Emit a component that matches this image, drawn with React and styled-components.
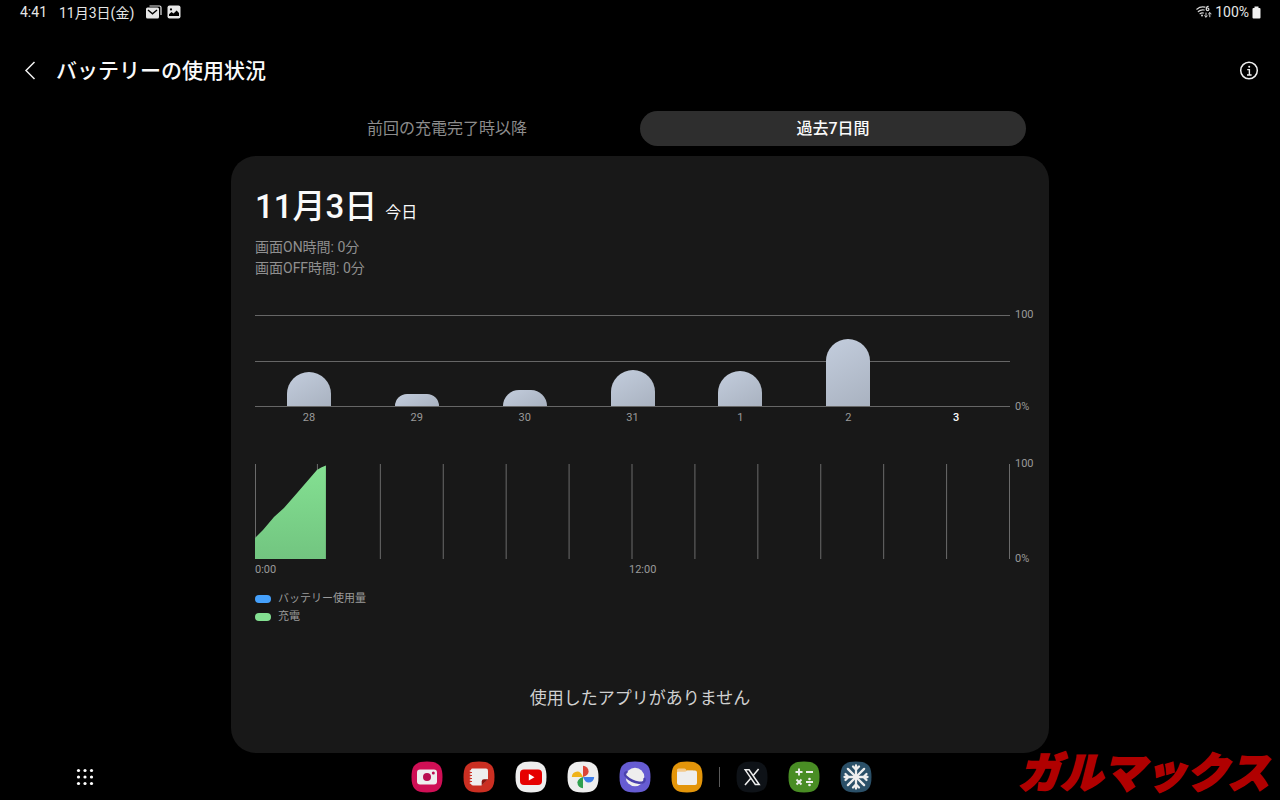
import React from 'react';
import styled, { createGlobalStyle } from 'styled-components';

const GlobalStyle = createGlobalStyle`
  * {
    box-sizing: border-box;
  }
  body {
    margin: 0;
    background: #000;
    color: #fafafa;
    font-family: Roboto, "Noto Sans CJK JP", sans-serif;
  }
  button {
    border: 0;
    padding: 0;
    background: none;
    color: inherit;
    font: inherit;
    cursor: pointer;
  }
  svg {
    display: block;
  }
`;

const Screen = styled.div`
  position: relative;
  display: flex;
  flex-direction: column;
  min-height: 100vh;
`;

const StatusBar = styled.div`
  display: flex;
  justify-content: space-between;
  height: 24px;
  padding: 0 19px 0 20px;
  font-size: 14px;
  color: #e6e6e6;
`;

const StatusGroup = styled.div`
  display: flex;
  align-items: center;
  gap: ${props => props.$gap}px;
`;

const Header = styled.header`
  display: flex;
  align-items: center;
  gap: 14px;
  height: 50px;
  margin-top: 22px;
  padding: 0 21px 0 18px;
`;

const IconButton = styled.button`
  width: 24px;
  height: 24px;
`;

const InfoButton = styled.button`
  width: 20px;
  height: 20px;
  margin-left: auto;
`;

const Title = styled.h1`
  margin: 0;
  font-size: 21px;
  line-height: 30px;
  font-weight: 500;
`;

const Tabs = styled.div`
  display: flex;
  width: 100%;
  max-width: 772px;
  margin: 15px auto 10px;
`;

const Tab = styled.button`
  flex: 1;
  height: 35px;
  border-radius: 18px;
  font-size: 16px;
  line-height: 24px;
  font-weight: ${props => (props.$active ? 500 : 400)};
  color: ${props => (props.$active ? '#fafafa' : '#8c8c8c')};
  background: ${props => (props.$active ? '#2e2e2e' : 'transparent')};
`;

const Card = styled.main`
  flex: 1;
  width: 100%;
  max-width: 818px;
  margin: 0 auto;
  padding: 31px 15px 28px 24px;
  border-radius: 25px;
  background: #181818;
`;

const DateHeading = styled.h2`
  display: flex;
  align-items: baseline;
  gap: 8px;
  margin: 0;
  font-size: 33px;
  line-height: 40px;
  font-weight: 500;
`;

const Today = styled.span`
  font-size: 16px;
  line-height: 20px;
  font-weight: 400;
`;

const Stats = styled.div`
  margin-top: 10px;
  font-size: 14px;
  line-height: 21px;
  color: #8f8f8f;
`;

const Chart = styled.section`
  display: grid;
  grid-template-columns: 1fr 19px;
  column-gap: 5px;
  margin-top: 36px;
  font-size: 11px;
  color: #9a9a9a;
`;

const DayPlot = styled.div`
  position: relative;
  display: flex;
  flex-direction: column;
  justify-content: space-between;
  height: 92px;
`;

const GridLine = styled.div`
  height: 1px;
  background: #666;
`;

const Bars = styled.div`
  position: absolute;
  inset: 0 0 1px;
  display: flex;
`;

const BarCell = styled.div`
  flex: 1;
  display: flex;
  align-items: flex-end;
  justify-content: center;
`;

const Bar = styled.div`
  width: 44px;
  border-radius: 22px 22px 0 0;
  background: linear-gradient(150deg, #c3cddd, #a9b2c0);
`;

const AxisLabels = styled.div`
  display: flex;
  flex-direction: column;
  justify-content: space-between;
  margin: -6px 0;
  line-height: 12px;
`;

const TickRow = styled.div`
  display: flex;
  line-height: 21px;
`;

const DayTick = styled.div`
  flex: 1;
  text-align: center;
  color: ${props => (props.$active ? '#fafafa' : 'inherit')};
  font-weight: ${props => (props.$active ? 500 : 400)};
`;

const HourTicks = styled.div`
  display: grid;
  grid-template-columns: 1fr 1fr;
  padding-right: 7px;
  line-height: 21px;
`;

const HourPlot = styled.svg`
  width: 100%;
  height: 95px;
  overflow: visible;
`;

const Legend = styled.ul`
  margin: 10px 0 0;
  padding: 0;
  list-style: none;
  font-size: 11px;
  line-height: 18px;
  color: #9a9a9a;
`;

const LegendItem = styled.li`
  display: flex;
  align-items: center;
  gap: 7px;
`;

const Swatch = styled.span`
  width: 16px;
  height: 8px;
  border-radius: 4px;
  background: ${props => props.$color};
`;

const EmptyMessage = styled.p`
  margin: 59px 9px 0 0;
  text-align: center;
  font-size: 17px;
  line-height: 26px;
  color: #d0d0d0;
`;

const Taskbar = styled.nav`
  display: grid;
  grid-template-columns: 1fr auto 1fr;
  align-items: center;
  height: 47px;
  padding: 0 71px 0 73px;
`;

const Dock = styled.div`
  display: flex;
  align-items: center;
  gap: 16px;
`;

const DockGroup = styled.div`
  display: flex;
  gap: 20px;
`;

const DockDivider = styled.div`
  width: 1px;
  height: 20px;
  background: #5a5a5a;
`;

const AppButton = styled.button`
  width: 32px;
  height: 32px;
`;

const Brand = styled.div`
  position: absolute;
  right: 11px;
  bottom: 0;
  font-family: "Noto Sans CJK JP", sans-serif;
  font-size: 42px;
  font-weight: 900;
  font-style: italic;
  line-height: 60px;
  color: #b00000;
  -webkit-text-stroke: 2px #b00000;
`;

const days = [
  { label: '28', value: 37 },
  { label: '29', value: 13 },
  { label: '30', value: 18 },
  { label: '31', value: 40 },
  { label: '1', value: 39 },
  { label: '2', value: 74 },
  { label: '3', value: 0 },
];

const legend = [
  { label: 'バッテリー使用量', color: '#45a0fb' },
  { label: '充電', color: '#84e092' },
];

const hours = [0, 1, 2, 3, 4, 5, 6, 7, 8, 9, 10, 11, 12];

// rounded-square outline shared by all of the dock icons
const TILE = 'M16 0.5C27.5 0.5 31.5 4.5 31.5 16S27.5 31.5 16 31.5 0.5 27.5 0.5 16 4.5 0.5 16 0.5Z';

const AppIcon = ({ name, fill, children }) => (
  <AppButton aria-label={name}>
    <svg width="32" height="32" viewBox="0 0 32 32">
      <path d={TILE} fill={fill} />
      {children}
    </svg>
  </AppButton>
);

const MailIcon = () => (
  <svg width="16" height="14" viewBox="0 0 16 14">
    <path d="M3.5 1H13.5Q15 1 15 2.5V10" fill="none" stroke="#e6e6e6" strokeWidth="1.2" />
    <rect x="0" y="2.5" width="13" height="11" rx="1.5" fill="#e6e6e6" />
    <path d="M2 5L6.5 8.8L11 5" fill="none" stroke="#000" strokeWidth="1.4" />
  </svg>
);

const GalleryIcon = () => (
  <svg width="14" height="14" viewBox="0 0 14 14">
    <rect x="0.5" y="0.5" width="13" height="13" rx="2" fill="#e6e6e6" />
    <path d="M2 11V9.2L4.5 7L6.5 8.6L9.6 5.5L12 8V11Z" fill="#000" />
    <circle cx="4" cy="4.4" r="1.1" fill="#000" />
  </svg>
);

const WifiIcon = () => (
  <svg width="16" height="14" viewBox="0 0 16 14">
    <g fill="none" stroke="#d8d8d8" strokeWidth="1.2" strokeLinecap="round">
      <path d="M0.8 4.2Q4.6 1 9 2.2" />
      <path d="M2.3 6.5Q5 4.2 8.2 5" />
      <path d="M4 8.7Q5.6 7.4 7.4 8" />
      <path d="M12.2 1.3Q10.3 1.4 10.3 4" />
      <circle cx="11.6" cy="4.3" r="1.3" />
      <path d="M10 8V12M8.6 10.8L10 12.2L11.4 10.8" strokeWidth="1" />
      <path d="M13.8 11.8V7.8M12.4 9L13.8 7.6L15.2 9" strokeWidth="1" />
    </g>
    <circle cx="6" cy="10.6" r="1" fill="#d8d8d8" />
  </svg>
);

const BatteryIcon = () => (
  <svg width="9" height="13" viewBox="0 0 9 13">
    <path d="M2.5 0.5H6.5V2H7.5Q8.5 2 8.5 3V11.5Q8.5 12.5 7.5 12.5H1.5Q0.5 12.5 0.5 11.5V3Q0.5 2 1.5 2H2.5Z" fill="#f0f0f0" />
  </svg>
);

function DailyChart() {
  return (
    <Chart>
      <DayPlot>
        <GridLine />
        <GridLine />
        <GridLine />
        <Bars>
          {days.map(day => (
            <BarCell key={day.label}>
              <Bar style={{ height: `${day.value}%` }} />
            </BarCell>
          ))}
        </Bars>
      </DayPlot>
      <AxisLabels>
        <span>100</span>
        <span>0%</span>
      </AxisLabels>
      <TickRow>
        {days.map(day => (
          <DayTick key={day.label} $active={day.label === '3'}>{day.label}</DayTick>
        ))}
      </TickRow>
    </Chart>
  );
}

function HourlyChart() {
  return (
    <Chart>
      <HourPlot viewBox="0 0 756 95" preserveAspectRatio="none">
        <defs>
          <linearGradient id="charge" x1="0" y1="0" x2="0" y2="1">
            <stop offset="0" stopColor="#84e092" />
            <stop offset="1" stopColor="#72c580" />
          </linearGradient>
        </defs>
        {hours.map(h => (
          <rect key={h} x={h * 63 - (h === 0 ? 0 : 1)} y="0" width="1" height="95" fill="#6a6a6a" />
        ))}
        <path d="M0 74L8 66L19 53L29 44L43 28L62 6Q66 3 71 1.5V95H0Z" fill="url(#charge)" />
      </HourPlot>
      <AxisLabels>
        <span>100</span>
        <span>0%</span>
      </AxisLabels>
      <HourTicks>
        <span>0:00</span>
        <span>12:00</span>
      </HourTicks>
    </Chart>
  );
}

function AppDock() {
  return (
    <Dock>
      <DockGroup>
        <AppIcon name="カメラ" fill="#cf0f55">
          <rect x="6" y="8.5" width="20" height="15" rx="3" fill="#eee" />
          <circle cx="16" cy="16" r="4" fill="#b90f50" />
          <circle cx="22.3" cy="12" r="1.5" fill="#b90f50" />
        </AppIcon>
        <AppIcon name="Notes" fill="#cb2f22">
          <path d="M9 7.5H23Q25 7.5 25 9.5V18L18.5 24.5H10Q8 24.5 8 22.5V9Q8 7.5 9 7.5Z" fill="#eee" />
          <path d="M25 18.3L18.7 24.5V20.5Q18.7 18.3 21 18.3Z" fill="#8e160f" />
          <path d="M6.8 10H9.5M6.8 13H9.5M6.8 16H9.5M6.8 19H9.5M6.8 22H9.5" stroke="#eee" strokeWidth="1.3" />
          <path d="M6.8 11.5H9M6.8 14.5H9M6.8 17.5H9M6.8 20.5H9" stroke="#cb2f22" strokeWidth="1.2" />
        </AppIcon>
        <AppIcon name="YouTube" fill="#eee">
          <rect x="5" y="8.5" width="22" height="15.5" rx="4" fill="#e60000" />
          <path d="M13.8 12.8L19.5 16.2L13.8 19.6Z" fill="#fff" />
        </AppIcon>
        <AppIcon name="フォト" fill="#eee">
          <path d="M16 16V4.8A5.6 5.6 0 0 1 21.6 10.4Q21.6 14 16 16Z" fill="#dc4437" />
          <path d="M16 16H4.8A5.6 5.6 0 0 1 10.4 10.4Q14 10.4 16 16Z" fill="#efb31b" />
          <path d="M16 16V27.2A5.6 5.6 0 0 1 10.4 21.6Q10.4 18 16 16Z" fill="#30a04f" />
          <path d="M16 16H27.2A5.6 5.6 0 0 1 21.6 21.6Q18 21.6 16 16Z" fill="#3f7fea" />
        </AppIcon>
        <AppIcon name="ブラウザ" fill="#665cd2">
          <circle cx="16" cy="16" r="9.3" fill="#eee" />
          <path d="M7.5 11Q4.3 12.6 7.5 16Q12.5 20.6 20 21.7Q26.5 22 25.5 18" fill="none" stroke="#4b42ad" strokeWidth="2.4" strokeLinecap="round" />
        </AppIcon>
        <AppIcon name="マイファイル" fill="#e3950a">
          <path d="M7.5 7.5H13.5Q15 7.5 15.5 9.5H22V14H6V9Q6 7.5 7.5 7.5Z" fill="#f3c98a" />
          <path d="M6 11.5Q6 10.8 7 10.8H13.5Q15 10.8 16 9.5H24Q26 9.5 26 11.5V22Q26 24 24 24H8Q6 24 6 22Z" fill="#eee" />
        </AppIcon>
      </DockGroup>
      <DockDivider />
      <DockGroup>
        <AppIcon name="X" fill="#0e1217">
          <path d="M9.2 8.8H13.1L23.2 23.5H19.3Z" fill="none" stroke="#eee" strokeWidth="1.5" />
          <path d="M22.6 8L17.2 14.4M14.8 17.3L9 24" stroke="#eee" strokeWidth="1.6" />
        </AppIcon>
        <AppIcon name="電卓" fill="#498d24">
          <path d="M7.5 11H14.5M11 7.5V14.5M18 11H25M8.5 18.5L13.5 23.5M13.5 18.5L8.5 23.5M18 21H25" stroke="#eee" strokeWidth="1.9" />
          <circle cx="21.5" cy="18" r="1.3" fill="#eee" />
          <circle cx="21.5" cy="24" r="1.3" fill="#eee" />
        </AppIcon>
        <AppIcon name="冷却" fill="#2b5068">
          <g stroke="#eee" strokeWidth="2.3" strokeLinecap="round" fill="none">
            {[0, 90, 180, 270].map(angle => (
              <path key={angle} d="M16 16V4.5M13 5.5L16 8.5L19 5.5" transform={`rotate(${angle} 16 16)`} />
            ))}
            {[45, 135, 225, 315].map(angle => (
              <path key={angle} d="M16 16V4.5" transform={`rotate(${angle} 16 16)`} />
            ))}
          </g>
        </AppIcon>
      </DockGroup>
    </Dock>
  );
}

export default function App() {
  return (
    <Screen>
      <GlobalStyle />
      <StatusBar>
        <StatusGroup $gap={12}>
          <span>4:41</span>
          <span>11月3日(金)</span>
          <StatusGroup $gap={5}>
            <MailIcon />
            <GalleryIcon />
          </StatusGroup>
        </StatusGroup>
        <StatusGroup $gap={3}>
          <WifiIcon />
          <span>100%</span>
          <BatteryIcon />
        </StatusGroup>
      </StatusBar>
      <Header>
        <IconButton aria-label="戻る">
          <svg width="24" height="24" viewBox="0 0 24 24">
            <path d="M16.5 3L8 11.5L16.5 20" fill="none" stroke="#f0f0f0" strokeWidth="1.5" />
          </svg>
        </IconButton>
        <Title>バッテリーの使用状況</Title>
        <InfoButton aria-label="情報">
          <svg width="20" height="20" viewBox="0 0 20 20">
            <circle cx="10" cy="9.5" r="8.3" fill="none" stroke="#f0f0f0" strokeWidth="1.5" />
            <path d="M8.2 8.6H10.4V14M8 14H12.6" fill="none" stroke="#f0f0f0" strokeWidth="1.4" />
            <circle cx="10.2" cy="5.7" r="1" fill="#f0f0f0" />
          </svg>
        </InfoButton>
      </Header>
      <Tabs role="tablist">
        <Tab role="tab" aria-selected="false">前回の充電完了時以降</Tab>
        <Tab role="tab" aria-selected="true" $active>過去7日間</Tab>
      </Tabs>
      <Card>
        <DateHeading>11月3日<Today>今日</Today></DateHeading>
        <Stats>
          <div>画面ON時間: 0分</div>
          <div>画面OFF時間: 0分</div>
        </Stats>
        <DailyChart />
        <HourlyChart />
        <Legend>
          {legend.map(item => (
            <LegendItem key={item.label}>
              <Swatch $color={item.color} />
              {item.label}
            </LegendItem>
          ))}
        </Legend>
        <EmptyMessage>使用したアプリがありません</EmptyMessage>
      </Card>
      <Taskbar>
        <IconButton aria-label="アプリ一覧">
          <svg width="24" height="24" viewBox="0 0 24 24" fill="#fff">
            {[5.5, 12, 18.5].map(y => [5.5, 12, 18.5].map(x => (
              <circle key={`${x}-${y}`} cx={x} cy={y} r="1.6" />
            )))}
          </svg>
        </IconButton>
        <AppDock />
      </Taskbar>
      <Brand>ガルマックス</Brand>
    </Screen>
  );
}
